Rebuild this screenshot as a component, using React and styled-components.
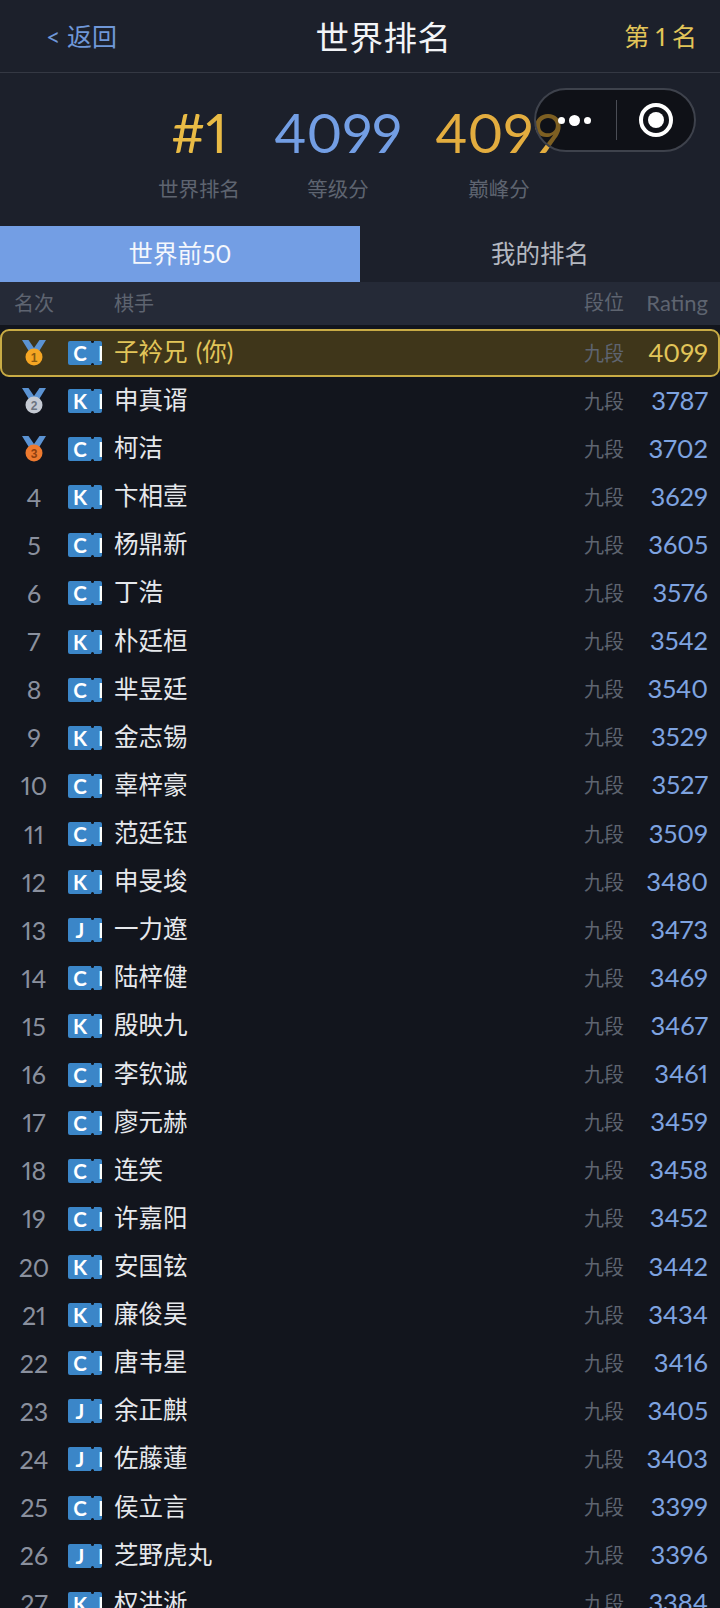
import styled, { createGlobalStyle } from "styled-components";

const players = [
  ["CN", "子衿兄 (你)", 4099],
  ["KR", "申真谞", 3787],
  ["CN", "柯洁", 3702],
  ["KR", "卞相壹", 3629],
  ["CN", "杨鼎新", 3605],
  ["CN", "丁浩", 3576],
  ["KR", "朴廷桓", 3542],
  ["CN", "芈昱廷", 3540],
  ["KR", "金志锡", 3529],
  ["CN", "辜梓豪", 3527],
  ["CN", "范廷钰", 3509],
  ["KR", "申旻埈", 3480],
  ["JP", "一力遼", 3473],
  ["CN", "陆梓健", 3469],
  ["KR", "殷映九", 3467],
  ["CN", "李钦诚", 3461],
  ["CN", "廖元赫", 3459],
  ["CN", "连笑", 3458],
  ["CN", "许嘉阳", 3452],
  ["KR", "安国铉", 3442],
  ["KR", "廉俊昊", 3434],
  ["CN", "唐韦星", 3416],
  ["JP", "余正麒", 3405],
  ["JP", "佐藤蓮", 3403],
  ["CN", "侯立言", 3399],
  ["JP", "芝野虎丸", 3396],
  ["KR", "权洪淅", 3384],
];

const medalColors = ["#f5a623", "#c5cad3", "#ee7a2f"];
const medalInk = ["#8a5a10", "#6d7480", "#8f3f10"];

const Medal = ({ rank }) => (
  <svg width="26" height="27" viewBox="0 0 26 27">
    <path d="M1 1h6.5L13 9l5.500-8H25l-8 13H9z" fill="#5b93d3" />
    <circle cx="13" cy="18" r="8.500" fill={medalColors[rank - 1]} />
    <text x="13" y="22.500" textAnchor="middle" fontSize="12" fontWeight="700" fontFamily="Liberation Sans" fill={medalInk[rank - 1]}>
      {rank}
    </text>
  </svg>
);

const App = () => {
  return (
    <Page>
      <GlobalStyle />
      <Header>
        <Back>&lt; 返回</Back>
        <Title>世界排名</Title>
        <Place>第 1 名</Place>
      </Header>
      <Stats>
        <Stat>
          <StatValue $color="#e9bb45">#1</StatValue>
          <StatLabel>世界排名</StatLabel>
        </Stat>
        <Stat>
          <StatValue $color="#739ee4">4099</StatValue>
          <StatLabel>等级分</StatLabel>
        </Stat>
        <Stat>
          <StatValue $color="#e3ad3f">4099</StatValue>
          <StatLabel>巅峰分</StatLabel>
        </Stat>
      </Stats>
      <Capsule>
        <Dots>
          <i />
          <b />
          <i />
        </Dots>
        <CapsuleLine />
        <Target />
      </Capsule>
      <Tabs>
        <Tab $active>世界前50</Tab>
        <Tab>我的排名</Tab>
      </Tabs>
      <TableHead>
        <RankCol>名次</RankCol>
        <HeadName>棋手</HeadName>
        <DanCol>段位</DanCol>
        <RatingHead>Rating</RatingHead>
      </TableHead>
      <List>
        {players.map(([country, name, rating], i) => (
          <Row key={name} $me={i === 0}>
            <RankCol>{i < 3 ? <Medal rank={i + 1} /> : i + 1}</RankCol>
            <Flag>
              <FlagLetter>{country[0]}</FlagLetter>
              <FlagRest>{country[1]}</FlagRest>
            </Flag>
            <Name $me={i === 0}>{name}</Name>
            <DanCol>九段</DanCol>
            <Rating $me={i === 0}>{rating}</Rating>
          </Row>
        ))}
      </List>
    </Page>
  );
};

const GlobalStyle = createGlobalStyle`
  html, body {
    margin: 0;
    background: #12151d;
  }
  * {
    box-sizing: border-box;
  }
`;

const Page = styled.div`
  position: relative;
  width: 720px;
  height: 1608px;
  overflow: hidden;
  background: #12151d;
  font-family: "Lato", "Noto Sans CJK SC", sans-serif;
  font-variant-numeric: proportional-nums;
`;

const Header = styled.div`
  height: 73px;
  padding: 0 23px 2px 46px;
  display: flex;
  align-items: center;
  justify-content: space-between;
  background: #1c202b;
  border-bottom: 1px solid #343843;
`;

const Back = styled.div`
  width: 140px;
  font-size: 25px;
  color: #6f97d8;
`;

const Title = styled.div`
  font-size: 33.5px;
  color: #f2f4f7;
  letter-spacing: 0.5px;
  margin-left: 24px;
`;

const Place = styled.div`
  width: 140px;
  text-align: right;
  font-size: 25px;
  color: #e2c559;
`;

const Capsule = styled.div`
  position: absolute;
  left: 534px;
  top: 88px;
  width: 162px;
  height: 64px;
  display: flex;
  align-items: center;
  border-radius: 32px;
  border: 2px solid #3e424c;
  background: rgba(0, 0, 0, 0.45);
`;

const Dots = styled.div`
  width: 80px;
  padding-left: 22px;
  display: flex;
  align-items: center;
  gap: 4px;
  i {
    width: 7px;
    height: 7px;
    border-radius: 50%;
    background: #fff;
  }
  b {
    width: 11px;
    height: 11px;
    border-radius: 50%;
    background: #fff;
  }
`;

const CapsuleLine = styled.div`
  width: 1px;
  height: 40px;
  background: #4a4d55;
`;

const Target = styled.div`
  margin-left: 22px;
  width: 34px;
  height: 34px;
  border: 4px solid #fff;
  border-radius: 50%;
  position: relative;
  &::after {
    content: "";
    position: absolute;
    inset: 5px;
    background: #fff;
    border-radius: 50%;
  }
`;

const Stats = styled.div`
  height: 153px;
  padding: 24px 0 0 158px;
  display: flex;
  align-items: flex-start;
  background: #1c202b;
`;

const Stat = styled.div`
  display: flex;
  flex-direction: column;
  align-items: center;
  &:first-child {
    width: 82px;
    margin-right: 35px;
  }
  &:nth-child(2) {
    width: 126px;
    margin-right: 35px;
  }
  &:nth-child(3) {
    width: 126px;
  }
`;

const StatValue = styled.div`
  font-size: 54.5px;
  line-height: 70px;
  font-weight: 400;
  color: ${(p) => p.$color};
  white-space: nowrap;
`;

const StatLabel = styled.div`
  margin-top: 8px;
  font-size: 20.5px;
  line-height: 28px;
  color: #5e6470;
  white-space: nowrap;
`;

const Tabs = styled.div`
  display: flex;
  height: 56px;
  background: #1c202b;
`;

const Tab = styled.div`
  flex: 1;
  display: flex;
  align-items: center;
  justify-content: center;
  padding-bottom: 3px;
  font-size: 24.5px;
  background: ${(p) => (p.$active ? "#739ee4" : "transparent")};
  color: ${(p) => (p.$active ? "#f4f7fc" : "#b4b8c0")};
`;

const TableHead = styled.div`
  height: 43px;
  display: flex;
  align-items: center;
  padding: 0 12px 2px 0;
  background: #252a37;
  color: #5e6470;
  font-size: 20px;
`;

const RankCol = styled.div`
  width: 68px;
  text-align: center;
  font-size: 20px;
`;

const HeadName = styled.div`
  margin-left: 46px;
  flex: 1;
`;

const DanCol = styled.div`
  width: 40px;
  padding-bottom: 2px;
  font-size: 20px;
  color: #5e6470;
  white-space: nowrap;
`;

const RatingHead = styled.div`
  width: 84px;
  text-align: right;
  font-size: 22px;
`;

const List = styled.div`
  padding-top: 4px;
`;

const Row = styled.div`
  height: ${(p) => (p.$me ? "48px" : "48.12px")};
  display: flex;
  align-items: center;
  padding-right: 12px;
  color: #8a909e;
  ${(p) =>
    p.$me &&
    `
    background: #3f361a;
    border: 2px solid #c9ac45;
    border-radius: 9px;
    padding-right: 10px;
  `}
  ${RankCol} {
    font-size: 25px;
    padding-bottom: 1px;
    display: flex;
    justify-content: center;
    align-items: center;
    margin-left: ${(p) => (p.$me ? "-2px" : "0")};
  }
`;

const Flag = styled.div`
  position: relative;
  display: flex;
  width: 34px;
  height: 24px;
  overflow: hidden;
  border-radius: 2px;
  background: #3b86c8;
  color: #fff;
  font-size: 20.5px;
  font-weight: 700;
  line-height: 24px;
  &::before,
  &::after {
    content: "";
    position: absolute;
    left: 23px;
    width: 3px;
    height: 3px;
    border-radius: 50%;
    background: #12151d;
  }
  &::before {
    top: -1px;
  }
  &::after {
    bottom: -1px;
  }
`;

const FlagLetter = styled.span`
  flex: 0 0 24px;
  text-align: center;
`;

const FlagRest = styled.span`
  flex: 0 0 auto;
  margin-left: 6px;
`;

const Name = styled.div`
  flex: 1;
  margin-left: 12px;
  padding-bottom: 5px;
  font-size: 24.5px;
  word-spacing: 2px;
  color: ${(p) => (p.$me ? "#e2c559" : "#e6e8ec")};
`;

const Rating = styled.div`
  width: 84px;
  padding-bottom: 3px;
  text-align: right;
  font-size: 25.5px;
  color: ${(p) => (p.$me ? "#e2c559" : "#7ea3e0")};
`;

export default App;
